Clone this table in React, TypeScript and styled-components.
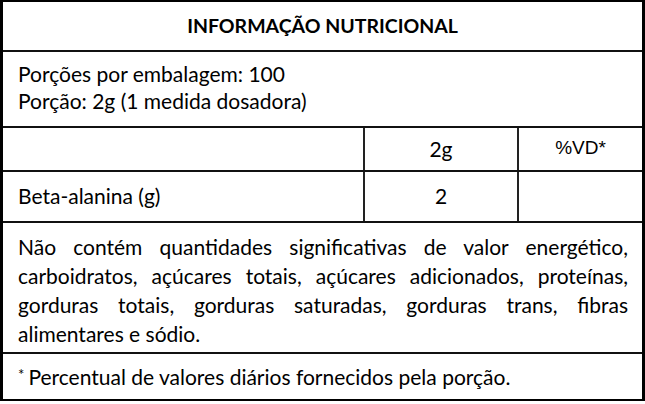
import React from 'react';
import styled, { createGlobalStyle } from 'styled-components';

const GlobalStyle = createGlobalStyle`
  html, body {
    margin: 0;
    padding: 0;
    background: #ffffff;
  }
  body {
    font-family: Lato, 'Open Sans', sans-serif;
    color: #000000;
  }
  *, *::before, *::after {
    box-sizing: border-box;
  }
`;

const Frame = styled.div`
  width: 645px;
  height: 401px;
  border-top: 2px solid #000;
  border-bottom: 2px solid #000;
  border-left: 3px solid #000;
  border-right: 3px solid #000;
  display: flex;
  flex-direction: column;
`;

const Row = styled.div<{ $height: number; $first?: boolean }>`
  display: flex;
  height: ${(p) => p.$height}px;
  flex: none;
  border-top: ${(p) => (p.$first ? 'none' : '2px solid #111')};
`;

const Title = styled.div`
  flex: 1;
  display: flex;
  align-items: center;
  justify-content: center;
  font-weight: 700;
  font-size: 19.5px;
  padding-bottom: 2px;
`;

const TextBlock = styled.div`
  flex: 1;
  padding: 8px 0 0 15px;
  font-size: 21px;
  line-height: 27px;
`;

const Cell = styled.div<{ $width?: number; $align?: 'left' | 'center'; $divider?: boolean }>`
  ${(p) => (p.$width ? `width: ${p.$width}px; flex: none;` : 'flex: 1;')}
  display: flex;
  align-items: center;
  justify-content: ${(p) => (p.$align === 'center' ? 'center' : 'flex-start')};
  padding-left: ${(p) => (p.$align === 'center' ? 0 : 15)}px;
  padding-bottom: 2px;
  border-left: ${(p) => (p.$divider ? '2px solid #222' : 'none')};
  font-size: 21px;
`;

const Arial = styled.span`
  font-family: 'Liberation Sans', Arial, sans-serif;
  font-size: 19px;
`;

const Note = styled.div`
  flex: 1;
  padding: 9px 14px 0 15px;
  font-size: 21px;
  line-height: 29px;
`;

const NoteLine = styled.div<{ $last?: boolean }>`
  text-align: justify;
  text-align-last: ${(p) => (p.$last ? 'left' : 'justify')};
  white-space: nowrap;
`;

const Footnote = styled.div`
  flex: 1;
  display: flex;
  align-items: center;
  padding: 0 0 1px 15px;
  font-size: 21px;
`;

const Star = styled.span`
  font-size: 15px;
  margin-right: 4px;
  position: relative;
  top: -2px;
`;

const noteLines = [
  'Não contém quantidades significativas de valor energético,',
  'carboidratos, açúcares totais, açúcares adicionados, proteínas,',
  'gorduras totais, gorduras saturadas, gorduras trans, fibras',
  'alimentares e sódio.',
];

export default function App() {
  return (
    <>
      <GlobalStyle />
      <Frame>
        <Row $height={48} $first>
          <Title>INFORMAÇÃO NUTRICIONAL</Title>
        </Row>
        <Row $height={76}>
          <TextBlock>
            Porções por embalagem: 100
            <br />
            Porção: 2g (1 medida dosadora)
          </TextBlock>
        </Row>
        <Row $height={44}>
          <Cell $width={360} />
          <Cell $width={154} $align="center" $divider>
            2g
          </Cell>
          <Cell $align="center" $divider>
            <Arial>%VD*</Arial>
          </Cell>
        </Row>
        <Row $height={51}>
          <Cell $width={360}>Beta-alanina (g)</Cell>
          <Cell $width={154} $align="center" $divider>
            2
          </Cell>
          <Cell $align="center" $divider />
        </Row>
        <Row $height={131}>
          <Note>
            {noteLines.map((line, i) => (
              <NoteLine key={i} $last={i === noteLines.length - 1}>
                {line}
              </NoteLine>
            ))}
          </Note>
        </Row>
        <Row $height={47}>
          <Footnote>
            <Star>*</Star>Percentual de valores diários fornecidos pela porção.
          </Footnote>
        </Row>
      </Frame>
    </>
  );
}
